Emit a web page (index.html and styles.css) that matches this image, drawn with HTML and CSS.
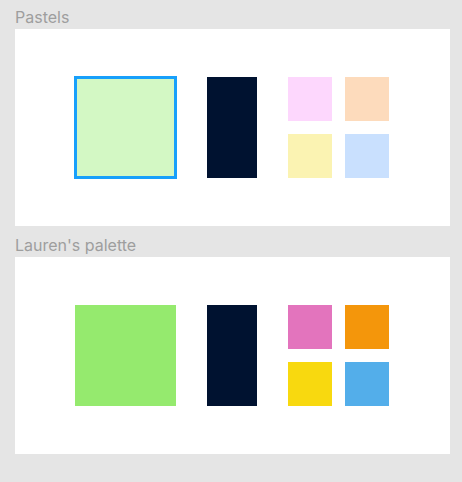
FILE: index.html
```html
<!DOCTYPE html>
<html>
<head>
<meta charset="utf-8">
<link rel="stylesheet" href="styles.css">
</head>
<body>
<div class="page">
  <section class="group">
    <div class="label">Pastels</div>
    <div class="panel">
      <div class="big sel" style="background:#d3f8c4"></div>
      <div class="tall" style="background:#001230"></div>
      <div class="grid">
        <div class="sw" style="background:#fdd7fd"></div>
        <div class="sw" style="background:#fddbbc"></div>
        <div class="sw" style="background:#fbf3b2"></div>
        <div class="sw" style="background:#c9e0fe"></div>
      </div>
    </div>
  </section>
  <section class="group">
    <div class="label">Lauren's palette</div>
    <div class="panel">
      <div class="big" style="background:#95ea6e"></div>
      <div class="tall" style="background:#001230"></div>
      <div class="grid">
        <div class="sw" style="background:#e374bd"></div>
        <div class="sw" style="background:#f4960b"></div>
        <div class="sw" style="background:#f8d90f"></div>
        <div class="sw" style="background:#53aeea"></div>
      </div>
    </div>
  </section>
</div>
</body>
</html>
```

FILE: styles.css
```css
html, body {
  margin: 0;
  padding: 0;
  background: #e5e5e5;
}
.page {
  padding: 0 12px 0 15px;
  display: flex;
  flex-direction: column;
  gap: 2px;
  font-family: Inter, "Liberation Sans", sans-serif;
}
.label {
  box-sizing: border-box;
  height: 29px;
  padding: 8px 0 0 0;
  font-size: 16px;
  line-height: 19px;
  color: #9e9e9e;
}
.panel {
  box-sizing: border-box;
  height: 197px;
  padding-right: 1px;
  background: #ffffff;
  display: flex;
  align-items: center;
  justify-content: center;
  gap: 31px;
}
.big {
  width: 101px;
  height: 101px;
}
.sel {
  outline: 3px solid #18a0fb;
  outline-offset: -2px;
}
.tall {
  width: 50px;
  height: 101px;
}
.grid {
  display: grid;
  grid-template-columns: 44px 44px;
  grid-template-rows: 44px 44px;
  gap: 13px;
}
```
